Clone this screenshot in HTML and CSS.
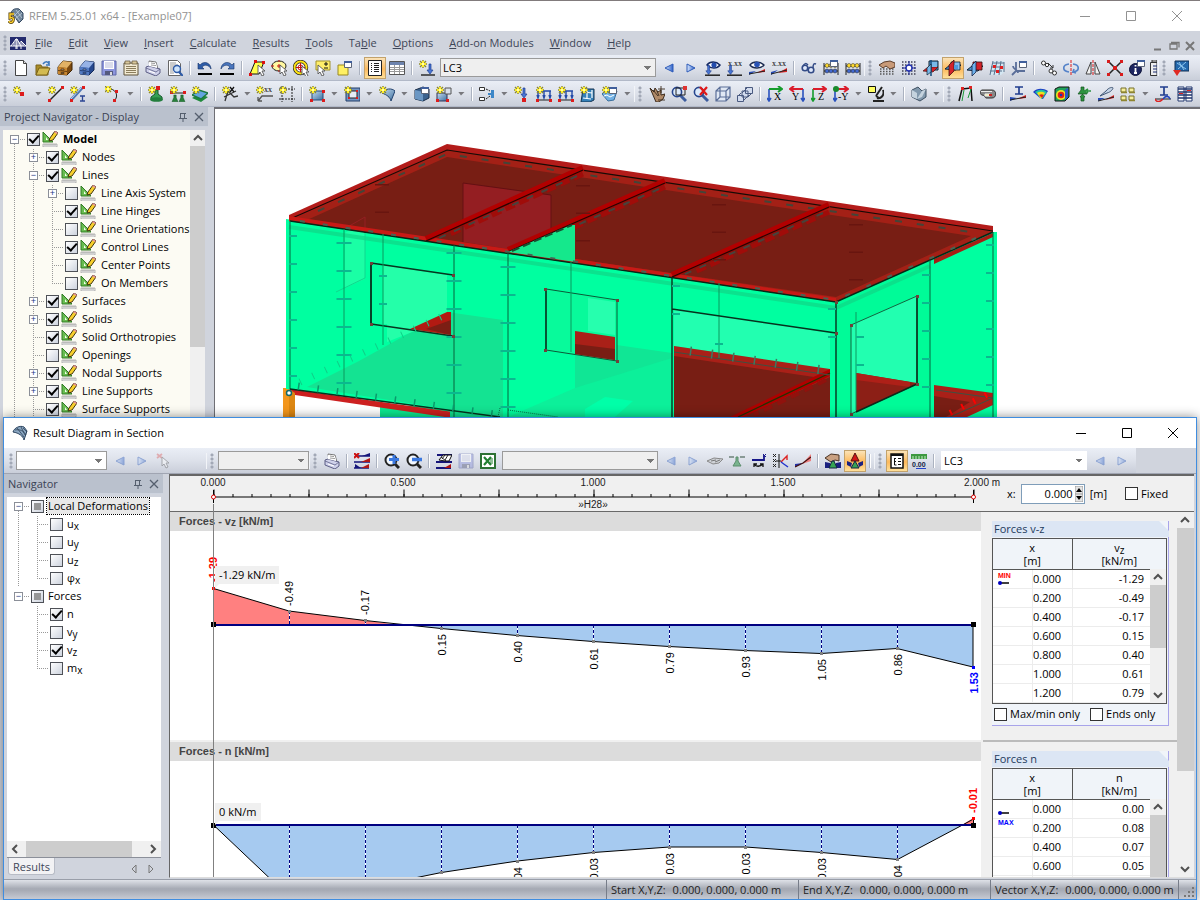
FILE: index.html
```html
<!DOCTYPE html>
<html lang="en">
<head>
<meta charset="utf-8">
<title>RFEM 5.25.01 x64 - [Example07]</title>
<link rel="stylesheet" href="styles.css">
</head>
<body>
<svg class="defs" aria-hidden="true">
<defs>
<linearGradient id="gb" x1="0" y1="0" x2="1" y2="1"><stop offset="0" stop-color="#c5dcf2"/><stop offset="1" stop-color="#3d6f9e"/></linearGradient>
<linearGradient id="ga" x1="0" y1="0" x2="1" y2="0"><stop offset="0" stop-color="#dceaff"/><stop offset="1" stop-color="#2d61c8"/></linearGradient>
<g id="star"><path d="M4 0v8M0 4h8M1 1l6 6M7 1L1 7" stroke="#8f8a28" stroke-width="1.4"/><path d="M4 1v6M1 4h6" stroke="#ffee21" stroke-width="2"/><circle cx="4" cy="4" r="1.3" fill="#fffbb0"/></g>
<g id="cur"><path d="M0 0v9l2-2 2 4 2-1-2-4h3z" fill="#fff" stroke="#555" stroke-width=".9"/></g>
<g id="win"><path d="M.5.5h7v6h-7z" fill="#fff" stroke="#5b6478"/><path d="M0 0h8v2H0z" fill="#405f9c"/></g>
<g id="mag"><path d="M9 9l6 6" stroke="#3c5c9e" stroke-width="3"/><circle cx="6" cy="6" r="4.6" fill="#dceafa" stroke="#26458d" stroke-width="1.6"/></g>
<g id="sup"><path d="M3 0h4v3l3 5H0l3-5z" fill="#28803b" stroke="#125023" stroke-width=".6"/></g>
<g id="ld"><path d="M0 1h14M1 1v6M7 1v6M13 1v6M0 5l1 3 1-3M6 5l1 3 1-3M12 5l1 3 1-3" fill="none" stroke="#234aa8" stroke-width="1.4"/></g>
<g id="arw"><path d="M2 0v6H0l3 4 3-4H4V0z" fill="#4876d5" stroke="#203f92" stroke-width=".7"/></g>
</defs>
<symbol id="i-app" viewBox="0 0 16 16"><path d="M3 5C4 1 8 0 11 1l4 4v6l-4 4-2-3z" fill="#6f8499" stroke="#344861"/><path d="M5 4l7 9M8 2l6 8M7 11l7-6M6 8l6-6" stroke="#c0cfdd" stroke-width=".8"/><path d="M6 6H2v4c3-1 4 0 3 3-1 2-3 2-4 0" fill="none" stroke="#523b00" stroke-width="3"/><path d="M6 6H2v4c3-1 4 0 3 3-1 2-3 2-4 0" fill="none" stroke="#ffd333" stroke-width="1.500"/></symbol>
<symbol id="i-bridge" viewBox="0 0 16 13"><path fill="#242b6e" d="M0 0h16v13H0z"/><path d="M0 9h16M6 12V2h1v10M6 2L1 9M7 2l4 7M11 4v8M11 4l5 5M4 5v4M9 5v4M13 6v3" stroke="#fff" fill="none"/></symbol>
<symbol id="i-new" viewBox="0 0 16 16"><path d="M2.500.500h8l3 3v12h-11z" fill="#fff" stroke="#444"/><path d="M10.500.500v3h3" fill="#ddd" stroke="#444"/></symbol>
<symbol id="i-open" viewBox="0 0 16 16"><path d="M1 5h5l1 2h6v8H1z" fill="#a98c28" stroke="#7a6318"/><path d="M1 15l3-7h11l-3 7z" fill="#d3bb52" stroke="#7a6318"/><path d="M8 4c2-3 5-3 6 0V1M15 5h-4" fill="none" stroke="#3d79bd" stroke-width="1.600"/></symbol>
<symbol id="i-cab" viewBox="0 0 16 16"><path d="M1 7l5-6 9 1v8l-5 5-9-1z" fill="#7c4a10" stroke="#3f2506"/><path d="M1 7l5-6 9 1-5 6z" fill="#e2b265"/><path d="M1 7l9 1v7l-9-1z" fill="#c98730"/><path d="M1 10.500l9 1M4 9h3v1H4zM4 12.500h3v1H4z" fill="#fff" stroke="#4a2c08" stroke-width=".8"/></symbol>
<symbol id="i-cabb" viewBox="0 0 16 16"><path d="M1 7l5-6 9 1v8l-5 5-9-1z" fill="#27498f" stroke="#152a58"/><path d="M1 7l5-6 9 1-5 6z" fill="#96b2e6"/><path d="M1 7l9 1v7l-9-1z" fill="#537bc4"/><path d="M1 10.500l9 1M4 9h3v1H4zM4 12.500h3v1H4z" fill="#fff" stroke="#1b3264" stroke-width=".8"/></symbol>
<symbol id="i-save" viewBox="0 0 16 16"><path d="M1 1h14v14H1z" fill="#8d96dd" stroke="#6168a8"/><path d="M3 1h10v8H3z" fill="#fff"/><path d="M4 3h8M4 5h8M4 7h8" stroke="#b5b9d8"/><path d="M4 11h8v4H4z" fill="#555a7d"/><path d="M9 12h2v3H9z" fill="#ddd"/></symbol>
<symbol id="i-note" viewBox="0 0 16 16"><path d="M1 3h14v12H1z" fill="#f2ead2" stroke="#5f5238"/><path d="M2 1h5v3H2zM9 1h5v3H9z" fill="#d8c79b" stroke="#5f5238" stroke-width=".7"/><path d="M3 6.500h10M3 8.500h10M3 10.500h10M3 12.500h10" stroke="#8b7d5c"/></symbol>
<symbol id="i-print" viewBox="0 0 16 16"><path d="M4 1l7 1 2 7-8-1z" fill="#fff" stroke="#777"/><path d="M1 7l3-1 11 3v4l-4 3-10-4z" fill="#cfd1ea" stroke="#5d5f86"/><path d="M4 6l8 2-1-5-7-1z" fill="#fff"/><path d="M1 8l10 4 4-3" fill="none" stroke="#5d5f86" stroke-width=".8"/><path d="M6 3l4 .6M6 5l5 .6" stroke="#9c9c9c"/><path d="M4 11l6 2" stroke="#fff"/></symbol>
<symbol id="i-prev" viewBox="0 0 16 16"><path d="M1.500.500h9l3 3v12h-12z" fill="#fff" stroke="#666"/><path d="M3 3h6M3 5h8M3 7h4M3 9h3M3 11h3M3 13h4" stroke="#999"/><circle cx="10" cy="9" r="3.500" fill="#cfe4fb" stroke="#2e5ba7" stroke-width="1.400"/><path d="M12 12l4 4" stroke="#2e5ba7" stroke-width="2.200"/></symbol>
<symbol id="i-undo" viewBox="0 0 16 16"><path d="M1 3v6h6L5 7c3-3 7-2 9 2 0-6-7-9-11-4z" fill="#2f5da8" stroke="#163468" stroke-width=".6"/><path d="M1 13h14v2H1z"/></symbol>
<symbol id="i-redo" viewBox="0 0 16 16"><path d="M15 3v6H9l2-2C8 4 4 5 2 9c0-6 7-9 11-4z" fill="#4a76bd" stroke="#163468" stroke-width=".6"/><path d="M1 13h14v2H1z"/></symbol>
<symbol id="i-selp" viewBox="0 0 16 16"><path d="M1 14L6 2h9l-5 12z" fill="#ffff4d" stroke="#111"/><path d="M0 13h3v3H0zM5 0h3v3H5zM13 1h3v3h-3z" fill="#d11"/><use href="#cur" x="9" y="5"/></symbol>
<symbol id="i-sele" viewBox="0 0 16 16"><ellipse cx="8" cy="6" rx="7" ry="5" fill="#fff7a0" stroke="#222"/><path d="M8 4v4M6 6h4M0 6h3M8 0v2M8 10v2" stroke="#c11"/><use href="#cur" x="9" y="5"/></symbol>
<symbol id="i-selc" viewBox="0 0 16 16"><circle cx="7.500" cy="7.500" r="6" fill="#fff" stroke="#222" stroke-width="3.400"/><circle cx="7.500" cy="7.500" r="6" fill="none" stroke="#ffe414" stroke-width="2"/><circle cx="7.500" cy="7.500" r="2.500" fill="none" stroke="#c11"/><path d="M7.500 3v9M3 7.500h9" stroke="#c11"/><use href="#cur" x="9" y="6"/></symbol>
<symbol id="i-seln" viewBox="0 0 16 16"><path d="M1 1h14v9H1z" fill="#ffee6a" stroke="#a1912b"/><path d="M11 2v4M9 4h4M9 8h4" stroke="#111"/><use href="#cur" x="3" y="5"/></symbol>
<symbol id="i-selw" viewBox="0 0 16 16"><path d="M1 5h10v10H1z" fill="#fff063" stroke="#988822"/><use href="#win" x="7" y="1"/></symbol>
<symbol id="i-list" viewBox="0 0 16 16"><path d="M1.500.500h13v15h-13z" fill="#fff" stroke="#222"/><path d="M4 3.500h1M4 5.500h1M4 7.500h1M4 9.500h1M4 11.500h1M7 3.500h5M7 5.500h5M7 7.500h5M7 9.500h5M7 11.500h5" stroke="#222"/></symbol>
<symbol id="i-table" viewBox="0 0 16 16"><path d="M.500 1.500h15v13H.500z" fill="#fff" stroke="#555"/><path d="M1 2h14v3H1z" fill="#6d83ad"/><path d="M1 7.500h14M1 9.500h14M1 11.500h14M5.500 5v9M10.500 5v9" stroke="#999"/></symbol>
<symbol id="i-nload" viewBox="0 0 16 16"><use href="#star"/><use href="#arw" x="8" y="4"/><path d="M2 15h14" stroke="#222" stroke-width="1.400"/></symbol>
<symbol id="i-l" viewBox="0 0 16 16"><path d="M4 8l8-4v8z" fill="url(#ga)" stroke="#2c5ab8"/></symbol>
<symbol id="i-r" viewBox="0 0 16 16"><path d="M12 8L4 4v8z" fill="url(#ga)" stroke="#2c5ab8"/></symbol>
<symbol id="i-eyeld" viewBox="0 0 16 16"><path d="M2 5c3-4 9-4 13 0-3 4-9 4-13 0z" fill="#fff" stroke="#162a62" stroke-width="1.500"/><circle cx="9" cy="5" r="2.600" fill="#234cae"/><use href="#arw" x="1" y="6" transform="scale(.9)"/><path d="M0 15.200h15" stroke="#222" stroke-width="1.500"/></symbol>
<symbol id="i-eyeres" viewBox="0 0 16 16"><path d="M1 5c3-4 10-4 14 0-3 4-11 4-14 0z" fill="#fff" stroke="#1c2b50" stroke-width="1.300"/><circle cx="8" cy="4.500" r="2.800" fill="#2852b5"/><path d="M0 15V12l7-1z" fill="#2449b5"/><path d="M16 9v3l-9 1z" fill="#d22"/><path d="M0 14l16-3" stroke="#222"/></symbol>
<symbol id="i-glass" viewBox="0 0 16 16"><g fill="#dfe8fa" stroke="#334b86" stroke-width="1.600"><circle cx="4" cy="8" r="2.800"/><circle cx="10" cy="10" r="2.800"/></g><path d="M6 8l2 1M2 6c2-3 3-3 5-1M12 8c0-4 1-5 3-4" fill="none" stroke="#334b86" stroke-width="1.500"/></symbol>
<symbol id="i-aba" viewBox="0 0 16 16"><path d="M1 3v12M15 3v12M1 6h14M1 11h14" stroke="#222"/><g stroke="#222" stroke-width=".5"><g fill="#ffda2e"><circle cx="4" cy="5.500" r="2"/><circle cx="8" cy="5.500" r="2"/><circle cx="12" cy="5.500" r="2"/></g><g fill="#4168d0"><circle cx="4" cy="11" r="2"/><circle cx="8" cy="11" r="2"/><circle cx="12" cy="11" r="2"/></g></g></symbol>
<symbol id="i-abaw" viewBox="0 0 16 16"><use href="#i-aba"/><use href="#win" x="7" y="0"/></symbol>
<symbol id="i-hand" viewBox="0 0 16 16"><path d="M1 9h14M1 11.500h14M1 14h14" stroke="#555" stroke-dasharray="1.500 1.500" stroke-width="1.500"/><path d="M0 5l5-3 6-1 5 2v4l-5 2-4-3-3 2z" fill="#c89a78" stroke="#5b3d29"/></symbol>
<symbol id="i-grid" viewBox="0 0 16 16"><path d="M1 2h15M1 5h15M1 8h15M1 11h15M1 14h15" stroke="#445" stroke-dasharray="1.500 1.500" stroke-width="1.300"/><path d="M8 1v14M1 8h14" stroke="#1f2b9a"/><circle cx="8" cy="8" r="3" fill="#fff" stroke="#2030b0" stroke-width="1.400"/></symbol>
<symbol id="i-pl1" viewBox="0 0 16 16"><path d="M6 1h9v9H6z" fill="#5aa5df" stroke="#123"/><path d="M0 11l5-4h10l-5 5z" fill="#d3222a" stroke="#411" stroke-width=".7"/><path d="M7 2h7v5H7z" fill="#78b8e8"/><path d="M8 0v16" stroke="#124a7c" stroke-width="1.500"/><path d="M4 8l4-4v8l-4 3z" fill="#78b8e8" stroke="#123" stroke-width=".7"/></symbol>
<symbol id="i-pl2" viewBox="0 0 16 16"><path d="M0 9l5-4h11l-5 5z" fill="#4f99da" stroke="#123"/><path d="M6 2h9v8H6z" fill="#86bdf0" stroke="#123" stroke-width=".8"/><path d="M4 5l5-5v11l-5 5z" fill="#d3222a" stroke="#411" stroke-width=".8"/><path d="M9 5h4v4H9z" fill="#4f99da"/></symbol>
<symbol id="i-pl3" viewBox="0 0 16 16"><path d="M0 10l5-4h11l-5 5z" fill="#4f99da" stroke="#123"/><path d="M6 2h9v8H6z" fill="#d3222a" stroke="#311" stroke-width=".8"/><path d="M5 5l4-4v11l-4 4z" fill="#6fb2ec" stroke="#124" stroke-width=".8"/></symbol>
<symbol id="i-gpl" viewBox="0 0 16 16"><path d="M4 1h11v11L12 15H1V10z" fill="#d4e7f2"/><path d="M1 11h12M2 7h12M4 3h11M4 1L1 15M8 1L5 15M12 1l-2 14M15 2v10" stroke="#58718c" fill="none"/><path d="M4 5h3v3H4zM11 6h3v3h-3zM7 10h3v3H7z" fill="#e02020"/></symbol>
<symbol id="i-axw" viewBox="0 0 16 16"><path d="M5 2v9M5 11h9M5 11l-4 4M2 6c0 4 5 3 5 7" fill="none" stroke="#5a6e99" stroke-width="1.800"/><use href="#win" x="8" y="1"/></symbol>
<symbol id="i-move" viewBox="0 0 16 16"><g fill="#fff" stroke="#333"><circle cx="2.500" cy="3" r="2"/><circle cx="6" cy="5" r="1.700"/><circle cx="10" cy="11" r="2"/><circle cx="13.500" cy="13" r="2"/></g><path d="M7 3l5 5M12 5v3H9" fill="none" stroke="#333"/></symbol>
<symbol id="i-rot" viewBox="0 0 16 16"><path d="M6 4C-1 5-1 11 6 12M10 4c7 1 7 7 0 8l1-3m-1 3l3 1" fill="none" stroke="#5583c9" stroke-width="1.700"/><path d="M8 0v16" stroke="#e01818" stroke-dasharray="3 1"/></symbol>
<symbol id="i-mir" viewBox="0 0 16 16"><path d="M6 2v12H1zM10 2v12h5z" fill="#f2f2f2" stroke="#444"/><path d="M8 0v16" stroke="#e01818" stroke-dasharray="3 1"/></symbol>
<symbol id="i-cross" viewBox="0 0 16 16"><path d="M2 2l12 12M14 2L2 14" stroke="#222" stroke-width="1.500"/><path d="M0 0h3v3H0zM13 0h3v3h-3zM0 13h3v3H0zM13 13h3v3h-3zM6 6h4v4H6z" fill="#d81c1c"/></symbol>
<symbol id="i-info" viewBox="0 0 16 16"><circle cx="6.500" cy="9.500" r="6" fill="#1c2560" stroke="#0d1238"/><path d="M6.500 8v5M6.500 5v1.500M5 13h3" stroke="#fff" stroke-width="1.800"/><use href="#win" x="8" y="0"/></symbol>
<symbol id="i-bat" viewBox="0 0 8 16"><path d="M3 0h5v2H3zM1.500 2.500H8v13H1.500z" fill="#eee" stroke="#333"/><path d="M4 6h4M4 9h4M4 12h4" stroke="#1b2c70"/></symbol>
<symbol id="i-scr" viewBox="0 0 16 16"><path d="M2 1h14v10H2z" fill="#2468ac" stroke="#0f2e55"/><path d="M4 3l9 6M6 2l5 8M13 2L5 9" stroke="#8fc7ef"/><path d="M0 10h8l-4 6z" fill="#e02a22"/></symbol>
<symbol id="i-node" viewBox="0 0 16 16"><use href="#star"/><path d="M7 6h4v4H7z" fill="#dd1c1c"/></symbol>
<symbol id="i-line" viewBox="0 0 16 16"><path d="M2 14L14 2" stroke="#222" stroke-width="1.400"/><path d="M0 13h3v3H0zM13 0h3v3h-3z" fill="#dd1c1c"/><use href="#star"/></symbol>
<symbol id="i-mem" viewBox="0 0 16 16"><path d="M1 14L12 2" stroke="#4e76b4" stroke-width="3"/><path d="M1 13L11 2" stroke="#c5d8f1"/><path d="M0 13h3v3H0zM12 0h3v3h-3z" fill="#dd1c1c"/><use href="#star"/><path d="M10 10h5M10 15h5M12.500 10v5" stroke="#2b4594" stroke-width="1.300"/></symbol>
<symbol id="i-arc" viewBox="0 0 16 16"><path d="M3 3c7-1 11 6 7 11" fill="none" stroke="#222"/><path d="M2 1h3v3H2zM10 4h3v3h-3zM8 13h3v3H8z" fill="#dd1c1c"/><use href="#star" x="-1" y="-1"/></symbol>
<symbol id="i-nsup" viewBox="0 0 16 16"><path d="M7 4h3v4l4 3v2H3v-2l4-3z" fill="#35a052" stroke="#14562a"/><ellipse cx="8.500" cy="13.500" rx="6.500" ry="2.300" fill="#237e3d"/><path d="M8 0h4v4H8z" fill="#dd1c1c"/><use href="#star"/></symbol>
<symbol id="i-lsup" viewBox="0 0 16 16"><path d="M1 7h14" stroke="#222"/><path d="M0 5h3v3H0zM13 5h3v3h-3z" fill="#dd1c1c"/><use href="#sup" transform="translate(2 9) scale(.6 .85)"/><use href="#sup" transform="translate(9 9) scale(.6 .85)"/><use href="#star"/></symbol>
<symbol id="i-ssup" viewBox="0 0 16 16"><path d="M0 12l7-4 9 3-7 5z" fill="#1f8a3b"/><path d="M0 9l7-5 9 3-7 6z" fill="#63a4df" stroke="#1d7a40" stroke-width="1.400"/><use href="#star"/></symbol>
<symbol id="i-dimx" viewBox="0 0 16 16"><path d="M3 15L6 5l6 6 4-1M2 11l12-6" fill="none" stroke="#333" stroke-width="1.300"/><path d="M8 1l4 5M12 1L8 6" stroke="#111" stroke-width="1.300"/><use href="#star"/></symbol>
<symbol id="i-frame" viewBox="0 0 16 16"><path d="M3 0v16M13 0v16M0 3h16M0 13h16" stroke="#222" stroke-dasharray="2 1" fill="none"/><use href="#star"/></symbol>
<symbol id="i-surf" viewBox="0 0 16 16"><path d="M3 5h11v9H3z" fill="url(#gb)" stroke="#264a78"/><path d="M1 13h3v3H1zM13 13h3v3h-3zM13 4h3v3h-3z" fill="#dd1c1c"/><use href="#star"/></symbol>
<symbol id="i-opng" viewBox="0 0 16 16"><path d="M2 2h14v13H2z" fill="#7495c2" stroke="#233f6a"/><path d="M5 5h8v7H5z" fill="#e5ecf6" stroke="#222"/><path d="M4 4h2v2H4zM12 4h2v2h-2zM4 11h2v2H4zM12 11h2v2h-2z" fill="#dd1c1c"/><use href="#star"/></symbol>
<symbol id="i-shell" viewBox="0 0 16 16"><path d="M3 7c3-5 10-5 13-2l-4 10c-1-4-4-6-9-8z" fill="url(#gb)" stroke="#21416d"/><use href="#star"/></symbol>
<symbol id="i-solid" viewBox="0 0 16 16"><path d="M1 4l8-3 6 2v9l-6 3-8-2z" fill="#3b628e" stroke="#182d49"/><path d="M1 4l8 2v9l-8-2z" fill="#6b97c4"/><use href="#win" x="7" y="1"/></symbol>
<symbol id="i-cubes" viewBox="0 0 16 16"><path d="M1 7h10v8H1z" fill="url(#gb)" stroke="#335"/><path d="M9 2h6v6H9z" fill="#d8dfe9" stroke="#555"/><path d="M0 13h3v3H0zM10 13h3v3h-3z" fill="#dd1c1c"/><use href="#star"/></symbol>
<symbol id="i-sect" viewBox="0 0 16 16"><path d="M.500 1.500h5v3h-5zM.500 11.500h5v3h-5z" fill="#fff" stroke="#333"/><path d="M7 3l4 2M7 13l4-3" stroke="#222" stroke-dasharray="2 1"/><path d="M9 7h3V4h3v8h-3v-3H9z" fill="#3d87c8"/></symbol>
<symbol id="i-pl" viewBox="0 0 16 16"><use href="#star"/><use href="#arw" x="7" y="2"/><path d="M8 12h4v4H8z" fill="#dd1c1c"/></symbol>
<symbol id="i-ll" viewBox="0 0 16 16"><use href="#ld" x="1" y="4"/><path d="M1 14h14" stroke="#222"/><path d="M0 13h3v3H0zM13 13h3v3h-3z" fill="#dd1c1c"/><use href="#star"/></symbol>
<symbol id="i-sl" viewBox="0 0 16 16"><path d="M3 3h11v11l-4 2H1z" fill="#3480b8" stroke="#143350"/><path d="M4 6l8 1M3 12l8 1M7 3v9M12 4v8" stroke="#fff" stroke-width="1.200"/><use href="#star"/></symbol>
<symbol id="i-fl" viewBox="0 0 16 16"><path d="M0 8l3-3h12l-3 9-6 1z" fill="#72b1e4" stroke="#3a6e9c"/><path d="M2 10l3-1 3 2 4-2" stroke="#fff" fill="none"/><use href="#win" x="7" y="1"/><use href="#star"/></symbol>
<symbol id="i-pan" viewBox="0 0 16 16"><path d="M1 2l4 4 1-4 3 4 3-2v5l4-1-2 5-4 3H7z" fill="#b08a69" stroke="#3b2a1c"/><path d="M4 4l5 6M8 5l2 5M12 0v7M9 3h7M9 14h7" stroke="#3b2a1c" stroke-width=".9"/></symbol>
<symbol id="i-zw" viewBox="0 0 16 16"><use href="#mag"/><path d="M5 2h9v7H5z" fill="none" stroke="#222"/><path d="M12 0h4v4h-4z" fill="#d33"/></symbol>
<symbol id="i-zx" viewBox="0 0 16 16"><use href="#mag"/><path d="M7 1l7 8M14 1L7 9" stroke="#e01818" stroke-width="2.200"/></symbol>
<symbol id="i-box" viewBox="0 0 16 16"><path d="M1 5l4-4h10v10l-4 4H1zM1 5h10v10M11 5l4-4M5 1v10h10M5 11l-4 4" fill="#e0e8f4" stroke="#5a6e98" stroke-width="1.200"/></symbol>
<symbol id="i-steps" viewBox="0 0 16 16"><path d="M8.500 1.500h7v6h-7zM5 5h6v6H5zM.500 9.500h6v6h-6z" fill="#d3dcee" stroke="#4a5a80"/><path d="M8 4l3-3M5 7l3-3M1 10l3-3M6 15l6-6M11 11l4-4" stroke="#4a5a80"/></symbol>
<symbol id="i-micro" viewBox="0 0 16 16"><path d="M.500.500h7v6h-7z" fill="#ffff62" stroke="#111"/><path d="M14 1l-6 9M15 4c2 5-2 9-6 8M5 15h11M8 10l3 2" fill="none" stroke="#222" stroke-width="2"/></symbol>
<symbol id="i-render" viewBox="0 0 16 16"><path d="M1 4l6-3 4 4 4-2v8l-6 4-8-4z" fill="#8299ad" stroke="#3e5062"/><path d="M1 4l5 3v6l-5-2zM11 5l4-2-4 8-5 2z" fill="#c5d3de"/></symbol>
<symbol id="i-defo" viewBox="0 0 16 16"><path d="M1 15L4 3l9-1 1 13" fill="none" stroke="#111" stroke-width="1.500"/><path d="M4 15L6 4M13 3l-3 9" stroke="#189838"/><path d="M3 1h3v3H3zM11 0h3v3h-3z" fill="#d22"/></symbol>
<symbol id="i-cyl" viewBox="0 0 16 16"><path d="M2 4h10c5 0 5 8 0 8H6c-1 0-1-3-4-3-2 0-2-5 0-5z" fill="#888" stroke="#333"/><path d="M1 5.500h11M5 8h5v2H5z" fill="#f5ef9d" stroke="#eee"/><path d="M9 8h3v2H9z" fill="#c22"/></symbol>
<symbol id="i-ires" viewBox="0 0 16 16"><path d="M5 1h8M5 8h8M9 1v7" stroke="#213e8e" stroke-width="1.700"/><path d="M0 15V11l7 1z" fill="#2449b5"/><path d="M16 9v3l-9 1z" fill="#d22"/><path d="M0 14l16-3" stroke="#222"/></symbol>
<symbol id="i-iso" viewBox="0 0 16 16"><path d="M1 6c4-4 10-4 15-1l-5 8c-2 0-4-2-10-7z" fill="#1c3fc4"/><path d="M3 6c4-3 8-3 12 0l-5 7z" fill="#20c4a5"/><path d="M5 7c3-2 6-1 8 0l-4 6z" fill="#e9e21d"/><path d="M7 9c2-1 3-1 5 0l-2 3z" fill="#e32118"/></symbol>
<symbol id="i-ball" viewBox="0 0 16 16"><path d="M1 3l4-2h10v10l-4 4H1z" fill="#20a35a" stroke="#111"/><circle cx="7" cy="9" r="5" fill="#f0e51f"/><circle cx="7" cy="9" r="3.300" fill="#e32118"/><circle cx="7" cy="9" r="1.300" fill="#2233aa"/><path d="M11 4l3-2v9l-3 3z" fill="#2b58c8"/></symbol>
<symbol id="i-reac" viewBox="0 0 16 16"><path d="M5 1h3v3l3 4H2l3-4zM5 15v-4H4l2.500-3L9 11H8v4z" fill="#2d9340" stroke="#155521" stroke-width=".7"/><path d="M15 5h-4m1-2L9 5l3 2" stroke="#2d9340" stroke-width="1.600" fill="none"/></symbol>
<symbol id="i-spoon" viewBox="0 0 16 16"><path d="M2 10L8 5c3-4 7-4 7-3s-2 4-6 5z" fill="#c4d3e6" stroke="#405573"/><path d="M0 15V12h7z" fill="#2449b5"/><path d="M16 9v3l-9 2z" fill="#d22"/><path d="M0 15l16-4" stroke="#222"/></symbol>
<symbol id="i-four" viewBox="0 0 16 16"><path d="M1 2h5v4H1zM9 2h5v4H9zM1 10h5v4H1zM9 10h5v4H9z" fill="#f7ef9a" stroke="#77702d"/><path d="M1 6.500h6M9 6.500h6M1 14.500h6M9 14.500h6" stroke="#8e852f" stroke-width="1.500"/></symbol>
<symbol id="i-icurve" viewBox="0 0 16 16"><path d="M5 1h8M5 9h8M9 1v8" stroke="#213e8e" stroke-width="1.700"/><path d="M0 13h16" stroke="#222"/><path d="M0 13c2 4 5 3 8 0" stroke="#d22" stroke-width="1.600" fill="none"/><path d="M8 13c3-4 6-3 7 0" stroke="#24b" stroke-width="1.600" fill="none"/></symbol>
<symbol id="i-tabs" viewBox="0 0 16 16"><path d="M1 1h6v14H1zM9 1h6v14H9z" fill="#fff" stroke="#20366e"/><path d="M1 3h14M1 6h14M1 9h14M1 12h14" stroke="#20366e" stroke-width="1.300"/><path d="M2 7.500h4M10 4.500h4" stroke="#d22"/></symbol>
<symbol id="i-disp" viewBox="0 0 16 16"><path d="M1 1l10 10H1z" fill="#68bd50" stroke="#307a25"/><path d="M4 6l2 3H4z" fill="#f7fff0"/><path d="M7 10l1-3 5-7 3 2-5 7z" fill="#f7cf2c" stroke="#403610"/><path d="M13 0l3 2-1 1-3-2z" fill="#e790a0"/><path d="M1 13h14v3H1z" fill="#f1f1f1" stroke="#999" stroke-width=".7"/><path d="M3 13v2M5 13v2M7 13v2M9 13v2M11 13v2M13 13v2" stroke="#888" stroke-width=".6"/></symbol>
<symbol id="i-dome" viewBox="0 0 16 16"><path d="M1 7c1-4 7-7 11-5l3 4-3 9c-1-4-5-7-11-8z" fill="#8ba7c2" stroke="#2b435e"/><path d="M5 3l7 9M9 2l4 8M3 5c5-1 9 1 11 5M15 7l-4-4" fill="none" stroke="#24364c" stroke-width=".7"/></symbol>
<symbol id="i-curx" viewBox="0 0 16 16"><path d="M1 1l5 4M6 1L1 5" stroke="#d66" stroke-width="1.700"/><use href="#cur" x="6" y="4"/></symbol>
<symbol id="i-drx" viewBox="0 0 16 16"><path d="M1 3h15M0 9h16M0 15h15" stroke="#15157a" stroke-width="1.500"/><path d="M8 3l8-3v3z" fill="#15157a"/><path d="M7 9l9-4v4z" fill="#b01818"/><path d="M1 15v-4l6 4z" fill="#15157a"/><path d="M7 15l8-4v4z" fill="#b01818"/><path d="M0 0l5 5M5 0L0 5" stroke="#c11" stroke-width="2"/></symbol>
<symbol id="i-zp" viewBox="0 0 16 16"><circle cx="7" cy="7" r="5.500" fill="#f3f8ff" stroke="#222" stroke-width="2"/><path d="M11 11l4 4" stroke="#222" stroke-width="3"/><path d="M10 2v9M5 6.500h10" stroke="#3b78df" stroke-width="3"/></symbol>
<symbol id="i-zm" viewBox="0 0 16 16"><circle cx="7" cy="7" r="5.500" fill="#f3f8ff" stroke="#222" stroke-width="2"/><path d="M11 11l4 4" stroke="#222" stroke-width="3"/><path d="M6 6.500h10" stroke="#3b78df" stroke-width="3.500"/></symbol>
<symbol id="i-drf" viewBox="0 0 16 16"><path d="M1 2h15M0 9h16M0 15h15" stroke="#15157a" stroke-width="1.800"/><path d="M3 7l4-5h9l-3 6H9z" fill="#fff" stroke="#111"/><path d="M6 6l3-4M9 7l3-5M5 4l5 4" stroke="#222"/><path d="M8 15l7-4v4z" fill="#a11"/></symbol>
<symbol id="i-xls" viewBox="0 0 16 16"><path d="M1 1h14v14H1z" fill="#fff" stroke="#2c7134" stroke-width="2"/><path d="M4 4l7 8M11 4l-7 8" stroke="#238032" stroke-width="2.200"/><path d="M10 6h3M10 8h3M10 10h3" stroke="#238032"/></symbol>
<symbol id="i-birds" viewBox="0 0 16 16"><path d="M0 8l7-3 9 1-4 4-6 1z" fill="#cfd2d7" stroke="#888"/><path d="M4 8l5-1M8 9l5-2" stroke="#777"/></symbol>
<symbol id="i-supl" viewBox="0 0 16 16"><path d="M0 4h5M11 4h5" stroke="#8a9a96" stroke-width="2"/><path d="M7 4h2v4l3 5H4l3-5z" fill="#79b48e" stroke="#5c8d6d"/></symbol>
<symbol id="i-swap" viewBox="0 0 16 16"><path d="M1 7h12M13 2v6" stroke="#17178a" stroke-width="1.800"/><path d="M12 1l3 3M15 1l-3 3" stroke="#17178a"/><path d="M3 11c2 3 6 3 9 0M12 14v-3H9M3 14v-3h3" stroke="#111" stroke-width="1.300" fill="none"/></symbol>
<symbol id="i-sym" viewBox="0 0 16 16"><path d="M0 1l3 3M3 1L0 4M0 6l3 3M3 6L0 9M0 11l3 3M3 11l-3 3" stroke="#222"/><path d="M6 1v14M3 8h5" stroke="#111"/><path d="M8 9l6-6v4" stroke="#d22" stroke-width="1.400" fill="none"/><path d="M8 9l7 5" stroke="#23c" stroke-width="1.400"/></symbol>
<symbol id="i-trend" viewBox="0 0 16 16"><path d="M0 14v-3l8-1z" fill="#2431a5"/><path d="M16 1v7l-9 3z" fill="#ef7f7f"/><path d="M0 14l8-4 8-6" stroke="#411" stroke-width="1.300" fill="none"/></symbol>
<symbol id="i-hsup" viewBox="0 0 16 16"><path d="M0 9l5 1 1 5H0zM16 9l-5 1-1 5h6z" fill="#1b2180"/><path d="M0 5l6-4 8 1v6l-4-1-4 2z" fill="#c9a183" stroke="#4a3425"/><path d="M7 8h2l3 7H4z" fill="#35a352" stroke="#124"/></symbol>
<symbol id="i-rsup" viewBox="0 0 16 16"><path d="M0 8l5 2-1 4-4-2zM16 8l-5 2 1 4 4-2z" fill="#1b2180"/><path d="M8 0l4 8H4z" fill="#d01818" stroke="#511"/><path d="M8 8l4 7H4z" fill="#35a352" stroke="#124"/></symbol>
<symbol id="i-tree" viewBox="0 0 16 16"><path d="M2 1h12v14H2z" fill="#fff" stroke="#111" stroke-width="1.500"/><path d="M2 2h12" stroke="#111" stroke-width="2"/><path d="M5.500 5v7h2M5 5.500h2M5 8.500h2M9 5.500h3M9 8.500h3M9 11.500h3" fill="none" stroke="#111"/></symbol>
<symbol id="i-pin" viewBox="0 0 16 16"><path d="M5.500 4v5M5 4.500h6M4 9.500h8M9.500 4v5M8 10v3" stroke="#555f6e" fill="none"/></symbol>
<symbol id="i-x" viewBox="0 0 16 16"><path d="M4 4l8 8M12 4l-8 8" stroke="#555f6e" stroke-width="1.300"/></symbol>
<symbol id="i-up" viewBox="0 0 16 16"><path d="M4 10l4-4 4 4" fill="none" stroke="#505050" stroke-width="2"/></symbol>
<symbol id="i-down" viewBox="0 0 16 16"><path d="M4 6l4 4 4-4" fill="none" stroke="#505050" stroke-width="2"/></symbol>
<symbol id="i-left" viewBox="0 0 16 16"><path d="M10 4L6 8l4 4" fill="none" stroke="#505050" stroke-width="2"/></symbol>
<symbol id="i-right" viewBox="0 0 16 16"><path d="M6 4l4 4-4 4" fill="none" stroke="#505050" stroke-width="2"/></symbol>
<symbol id="i-min" viewBox="0 0 12 12"><path d="M1 6.500h10" stroke="currentColor"/></symbol>
<symbol id="i-max" viewBox="0 0 12 12"><path d="M1.500 1.500h9v9h-9z" fill="none" stroke="currentColor"/></symbol>
<symbol id="i-close" viewBox="0 0 12 12"><path d="M1 1l10 10M11 1L1 11" stroke="currentColor"/></symbol>
</svg>

<div class="app">
<header class="titlebar">
  <svg class="ic"><use href="#i-app"/></svg><h1>RFEM 5.25.01 x64 - [Example07]</h1>
  <button class="wb" aria-label="Minimize"><svg><use href="#i-min"/></svg></button><button class="wb" aria-label="Maximize"><svg><use href="#i-max"/></svg></button><button class="wb" aria-label="Close"><svg><use href="#i-close"/></svg></button>
</header>
<nav class="menubar">
  <i class="grip"></i><svg class="bridge"><use href="#i-bridge"/></svg>
  <div class="menus"><a href="#"><u>F</u>ile</a><a href="#"><u>E</u>dit</a><a href="#"><u>V</u>iew</a><a href="#"><u>I</u>nsert</a><a href="#"><u>C</u>alculate</a><a href="#"><u>R</u>esults</a><a href="#"><u>T</u>ools</a><a href="#">Ta<u>b</u>le</a><a href="#"><u>O</u>ptions</a><a href="#"><u>A</u>dd-on Modules</a><a href="#"><u>W</u>indow</a><a href="#"><u>H</u>elp</a></div>
  <svg class="mdi" viewBox="0 0 44 12"><path d="M2 9.500h7" stroke="#777" stroke-width="2"/><path d="M19 2.500h8v5M18 4h7v5h-7z" fill="none" stroke="#777" stroke-width="1.300"/><path d="M34 2l8 8M42 2l-8 8" stroke="#777" stroke-width="2"/></svg>
</nav>
<div class="toolbar">
<i class="grip"></i>
<button class="tb" aria-label="New"><svg><use href="#i-new"/></svg></button><button class="tb" aria-label="Open"><svg><use href="#i-open"/></svg></button><button class="tb" aria-label="Project"><svg><use href="#i-cab"/></svg></button><button class="tb" aria-label="Blocks"><svg><use href="#i-cabb"/></svg></button><button class="tb" aria-label="Save"><svg><use href="#i-save"/></svg></button><button class="tb" aria-label="Notes"><svg><use href="#i-note"/></svg></button><button class="tb" aria-label="Print"><svg><use href="#i-print"/></svg></button><button class="tb" aria-label="Preview"><svg><use href="#i-prev"/></svg></button>
<i class="sep"></i>
<button class="tb" aria-label="Undo"><svg><use href="#i-undo"/></svg></button><button class="tb" aria-label="Redo"><svg><use href="#i-redo"/></svg></button>
<i class="sep"></i>
<button class="tb" aria-label="Select polygon"><svg><use href="#i-selp"/></svg></button><button class="tb" aria-label="Select ellipse"><svg><use href="#i-sele"/></svg></button><button class="tb" aria-label="Select circle"><svg><use href="#i-selc"/></svg></button><button class="tb" aria-label="Add to selection"><svg><use href="#i-seln"/></svg></button><button class="tb" aria-label="Select special"><svg><use href="#i-selw"/></svg></button>
<i class="sep"></i>
<button class="tb on" aria-label="Navigator"><svg><use href="#i-list"/></svg></button><button class="tb" aria-label="Tables"><svg><use href="#i-table"/></svg></button>
<i class="sep"></i>
<button class="tb" aria-label="New load case"><svg><use href="#i-nload"/></svg></button>
<select class="combo main" aria-label="Load case"><option>LC3</option></select>
<button class="tb" aria-label="Previous"><svg><use href="#i-l"/></svg></button><button class="tb" aria-label="Next"><svg><use href="#i-r"/></svg></button><button class="tb" aria-label="Show loads"><svg><use href="#i-eyeld"/></svg></button><button class="tb" aria-label="Load values"><svg viewBox="0 0 18 16"><text x="2" y="6" class="ict">x.xx</text><use href="#arw" x="2" y="6" transform="scale(.9)"/><path d="M1 15.200h15" stroke="#222" stroke-width="1.500"/></svg></button><button class="tb" aria-label="Show results"><svg><use href="#i-eyeres"/></svg></button><button class="tb" aria-label="Result values"><svg viewBox="0 0 18 16"><text x="2" y="6" class="ict">x.xx</text><path d="M1 15V12l7-2z" fill="#2449b5"/><path d="M17 8v4l-9 1z" fill="#d22"/><path d="M1 14l16-4" stroke="#222"/></svg></button>
<i class="sep"></i>
<button class="tb" aria-label="View"><svg><use href="#i-glass"/></svg></button><button class="tb" aria-label="Calculation settings"><svg><use href="#i-abaw"/></svg></button><button class="tb" aria-label="Calculate"><svg><use href="#i-aba"/></svg></button>
<i class="grip brk"></i>
<button class="tb" aria-label="Snap"><svg><use href="#i-hand"/></svg></button><button class="tb" aria-label="Grid"><svg><use href="#i-grid"/></svg></button><button class="tb" aria-label="Plane XY"><svg><use href="#i-pl1"/></svg></button><button class="tb on" aria-label="Plane YZ"><svg><use href="#i-pl2"/></svg></button><button class="tb" aria-label="Plane XZ"><svg><use href="#i-pl3"/></svg></button><button class="tb" aria-label="Work plane"><svg><use href="#i-gpl"/></svg></button><button class="tb" aria-label="Coordinate system"><svg><use href="#i-axw"/></svg></button>
<i class="sep"></i>
<button class="tb" aria-label="Move"><svg><use href="#i-move"/></svg></button><button class="tb" aria-label="Rotate"><svg><use href="#i-rot"/></svg></button><button class="tb" aria-label="Mirror"><svg><use href="#i-mir"/></svg></button><button class="tb" aria-label="Connect"><svg><use href="#i-cross"/></svg></button><button class="tb" aria-label="Info"><svg><use href="#i-info"/></svg></button><button class="tb half" aria-label="More"><svg><use href="#i-bat"/></svg></button>
<i class="grip brk"></i>
<button class="tb" aria-label="Screen"><svg><use href="#i-scr"/></svg></button>
</div>
<div class="toolbar">
<i class="grip"></i>
<button class="tb" aria-label="New node"><svg><use href="#i-node"/></svg></button><i class="dd"></i><button class="tb" aria-label="New line"><svg><use href="#i-line"/></svg></button><button class="tb" aria-label="New member"><svg><use href="#i-mem"/></svg></button><i class="dd"></i><button class="tb" aria-label="New arc"><svg><use href="#i-arc"/></svg></button><i class="dd"></i>
<i class="sep"></i>
<button class="tb" aria-label="Nodal support"><svg><use href="#i-nsup"/></svg></button><button class="tb" aria-label="Line support"><svg><use href="#i-lsup"/></svg></button><button class="tb" aria-label="Surface support"><svg><use href="#i-ssup"/></svg></button>
<i class="sep"></i>
<button class="tb" aria-label="Dimension"><svg><use href="#i-dimx"/></svg></button><i class="dd"></i><button class="tb" aria-label="Comment"><svg viewBox="0 0 18 16"><path d="M2 15l4-5h11M2 15v-4M2 15h4" fill="none" stroke="#555" stroke-width="1.300"/><text x="8" y="6" class="ict">xx</text><use href="#star"/></svg></button><button class="tb" aria-label="Guidelines"><svg><use href="#i-frame"/></svg></button>
<i class="sep"></i>
<button class="tb" aria-label="Surface"><svg><use href="#i-surf"/></svg></button><i class="dd"></i><button class="tb" aria-label="Opening"><svg><use href="#i-opng"/></svg></button><i class="dd"></i><button class="tb" aria-label="Shell"><svg><use href="#i-shell"/></svg></button><i class="dd"></i><button class="tb" aria-label="Solid"><svg><use href="#i-solid"/></svg></button><button class="tb" aria-label="Solids"><svg><use href="#i-cubes"/></svg></button><i class="dd"></i>
<i class="sep"></i>
<button class="tb" aria-label="Section"><svg><use href="#i-sect"/></svg></button><i class="dd"></i><button class="tb" aria-label="Nodal load"><svg><use href="#i-pl"/></svg></button><button class="tb" aria-label="Member load"><svg><use href="#i-ll"/></svg></button><button class="tb" aria-label="Line load"><svg><use href="#i-ll"/></svg></button><button class="tb" aria-label="Surface load"><svg><use href="#i-sl"/></svg></button><button class="tb" aria-label="Free load"><svg><use href="#i-fl"/></svg></button><i class="dd"></i>
<i class="grip brk"></i>
<button class="tb" aria-label="Pan"><svg><use href="#i-pan"/></svg></button><button class="tb" aria-label="Zoom window"><svg><use href="#i-zw"/></svg></button><button class="tb" aria-label="Zoom all"><svg><use href="#i-zx"/></svg></button><button class="tb" aria-label="Isometric"><svg><use href="#i-box"/></svg></button><button class="tb" aria-label="Views"><svg><use href="#i-steps"/></svg></button>
<i class="sep"></i>
<button class="tb" aria-label="View X"><svg viewBox="0 0 16 16"><path d="M2 3v12M0 12l2 3 2-3" stroke="#2a52be" stroke-width="1.600" fill="none"/><path d="M2 3h12M11 0l4 3-4 3" fill="none" stroke="#159c2c" stroke-width="2"/><text x="7" y="14" class="icl">X</text></svg></button><button class="tb" aria-label="View Y"><svg viewBox="0 0 16 16"><path d="M14 3v12M12 12l2 3 2-3" stroke="#2a52be" stroke-width="1.600" fill="none"/><path d="M14 3H2M5 0L1 3l4 3" fill="none" stroke="#da1c2c" stroke-width="2"/><text x="3" y="14" class="icl">Y</text></svg></button><button class="tb" aria-label="View Z"><svg viewBox="0 0 16 16"><path d="M2 3v12M0 12l2 3 2-3" stroke="#159c2c" stroke-width="1.600" fill="none"/><path d="M2 3h12M11 0l4 3-4 3" fill="none" stroke="#da1c2c" stroke-width="2"/><text x="7" y="14" class="icl">Z</text></svg></button><button class="tb" aria-label="View -Y"><svg viewBox="0 0 16 16"><path d="M2 3v12M0 12l2 3 2-3" stroke="#2a52be" stroke-width="1.600" fill="none"/><path d="M3 3h11M11 0l4 3-4 3" fill="none" stroke="#da1c2c" stroke-width="2"/><circle cx="3" cy="3" r="3" fill="#188a2c"/><text x="5" y="14" class="icl">-Y</text></svg></button><i class="dd"></i><button class="tb" aria-label="Visibility"><svg><use href="#i-micro"/></svg></button><i class="dd"></i>
<i class="sep"></i>
<button class="tb" aria-label="Render"><svg><use href="#i-render"/></svg></button><i class="dd"></i>
<i class="grip brk"></i>
<button class="tb" aria-label="Deformation"><svg><use href="#i-defo"/></svg></button><button class="tb" aria-label="Animate"><svg><use href="#i-cyl"/></svg></button>
<i class="sep"></i>
<button class="tb" aria-label="Members"><svg><use href="#i-ires"/></svg></button><button class="tb" aria-label="Isobands"><svg><use href="#i-iso"/></svg></button><button class="tb" aria-label="Solids results"><svg><use href="#i-ball"/></svg></button><button class="tb" aria-label="Reactions"><svg><use href="#i-reac"/></svg></button><button class="tb" aria-label="Sections"><svg><use href="#i-spoon"/></svg></button><button class="tb" aria-label="Windows"><svg><use href="#i-four"/></svg></button><i class="dd"></i><button class="tb" aria-label="Diagrams"><svg><use href="#i-icurve"/></svg></button><button class="tb" aria-label="Result tables"><svg><use href="#i-tabs"/></svg></button>
</div>

<div class="work">
<aside class="dock">
  <div class="dockhead"><h2>Project Navigator - Display</h2><svg class="ic"><use href="#i-pin"/></svg><svg class="ic"><use href="#i-x"/></svg></div>
  <div class="dockbody">
    <ul class="tree root">
      <li><div class="row"><b class="tg">−</b><i class="dots"></i><input type="checkbox" id="t0" checked><svg class="ic"><use href="#i-disp"/></svg><label class="strong" for="t0">Model</label></div>
      <ul>
        <li class="row"><b class="tg">+</b><i class="dots"></i><input type="checkbox" id="t1" checked><svg class="ic"><use href="#i-disp"/></svg><label for="t1">Nodes</label></li>
        <li><div class="row"><b class="tg">−</b><i class="dots"></i><input type="checkbox" id="t2" checked><svg class="ic"><use href="#i-disp"/></svg><label for="t2">Lines</label></div>
        <ul class="last">
          <li class="row"><b class="tg">+</b><i class="dots"></i><input type="checkbox" id="t3"><svg class="ic"><use href="#i-disp"/></svg><label for="t3">Line Axis System</label></li>
          <li class="row"><i class="dots long"></i><input type="checkbox" id="t4" checked><svg class="ic"><use href="#i-disp"/></svg><label for="t4">Line Hinges</label></li>
          <li class="row"><i class="dots long"></i><input type="checkbox" id="t5"><svg class="ic"><use href="#i-disp"/></svg><label for="t5">Line Orientations</label></li>
          <li class="row"><i class="dots long"></i><input type="checkbox" id="t6" checked><svg class="ic"><use href="#i-disp"/></svg><label for="t6">Control Lines</label></li>
          <li class="row"><i class="dots long"></i><input type="checkbox" id="t7"><svg class="ic"><use href="#i-disp"/></svg><label for="t7">Center Points</label></li>
          <li class="row"><i class="dots long"></i><input type="checkbox" id="t8"><svg class="ic"><use href="#i-disp"/></svg><label for="t8">On Members</label></li>
        </ul></li>
        <li class="row"><b class="tg">+</b><i class="dots"></i><input type="checkbox" id="t9" checked><svg class="ic"><use href="#i-disp"/></svg><label for="t9">Surfaces</label></li>
        <li class="row"><b class="tg">+</b><i class="dots"></i><input type="checkbox" id="t10" checked><svg class="ic"><use href="#i-disp"/></svg><label for="t10">Solids</label></li>
        <li class="row"><i class="dots long"></i><input type="checkbox" id="t11" checked><svg class="ic"><use href="#i-disp"/></svg><label for="t11">Solid Orthotropies</label></li>
        <li class="row"><i class="dots long"></i><input type="checkbox" id="t12"><svg class="ic"><use href="#i-disp"/></svg><label for="t12">Openings</label></li>
        <li class="row"><b class="tg">+</b><i class="dots"></i><input type="checkbox" id="t13" checked><svg class="ic"><use href="#i-disp"/></svg><label for="t13">Nodal Supports</label></li>
        <li class="row"><b class="tg">+</b><i class="dots"></i><input type="checkbox" id="t14" checked><svg class="ic"><use href="#i-disp"/></svg><label for="t14">Line Supports</label></li>
        <li class="row"><i class="dots long"></i><input type="checkbox" id="t15" checked><svg class="ic"><use href="#i-disp"/></svg><label for="t15">Surface Supports</label></li>
      </ul></li>
    </ul>
    <div class="vbar"><svg class="ic"><use href="#i-up"/></svg><i class="thumb t200"></i></div>
  </div>
</aside>
<main class="view">
<svg class="scene" viewBox="215 109 985 308" role="img" aria-label="Building model">
  <path d="M380 406h120v11H380z" fill="#0be890"/>
  <path d="M283 388h12v29h-12z" fill="#f3961c"/><path d="M289 388h6v29h-6z" fill="#dc8612"/>
  <path d="M286 219l550 83 157-70h4v185H497l-211-28z" fill="#00ffa0"/>
  <path d="M836 302l94-42v157h-94z" fill="#00fb98"/>
  <path d="M307 387l52-26 29-16 59-33 56 8v97h-6z" fill="#14e392"/>
  <path d="M575 339l97 14v64H575z" fill="#10e695"/><path d="M508 417l67-29 97-30v59z" fill="#0cf09a"/><path d="M585 409l20-12 28 4-18 16h-30z" fill="#00ffa8"/>
  <path d="M383 265l64 10v43l-60 24v-18h-4z" fill="#24ffa9"/><path d="M345 233l20-14v60l-20 9z" fill="#1affa5"/><path d="M336 292l29-14v-60" fill="none" stroke="#10d88e"/>
  <path d="M371 324v-61M371 263l82 12M371 324l82 12" stroke="#07351f" stroke-width="1.400" fill="none"/>
  <path d="M410 329l37-17h4v23z" fill="#b21a12"/><path d="M426 329l25-9v15z" fill="#7c1e14"/>
  <path d="M546 289l71 11v61l-71-11z" fill="#08fa9b" stroke="#0a5a37"/><path d="M588 298l27 4v33l-27-4z" fill="#26ffae"/><path d="M575 331l40 6v23l-40-6z" fill="#a92018"/><path d="M575 344l40 5v11l-40-6z" fill="#791d14"/>
  <path d="M674 309l156 24v37l-156-24z" fill="#22ffb0"/><path d="M674 346l156 23v48H674z" fill="#a92018"/><path d="M674 356l140 21-70 40h-70z" fill="#781e14"/><path d="M830 377v40h-88z" fill="#781e14"/>
  <path d="M830 369v7l-86 41h-14z" fill="#b00000"/><path d="M830 373l-92 44" stroke="#230" stroke-width="1.200"/><path d="M826 380l-72 35" stroke="#90120d" stroke-width="4" stroke-dasharray="9 6"/>
  <path d="M674 352l156 23" stroke="#3e5142" fill="none"/><path d="M690 351l140 20" stroke="#3d7961" stroke-width="9" stroke-dasharray="1.500 20"/>
  <path d="M851 325l66-29v88l-66 30z" fill="#22ffb0" stroke="#13643f"/><path d="M856 373l61 10v1l-61 28z" fill="#8c1f16"/><path d="M856 373l54 9v5l-54-7z" fill="#ae2018"/><path d="M856 412l61-28v-88" fill="none" stroke="#0b2a1b" stroke-width="1.500"/>
  <path d="M934 385l59 8v12l-26 12h-33z" fill="#a92018"/><path d="M934 396l36 6-24 15h-12z" fill="#781e14"/><path d="M936 390l57 8M950 417l43-19" stroke="#3e5142"/><path d="M950 413l40-20" stroke="#f00" stroke-width="6" stroke-dasharray="2 11"/>
  <path d="M284 394v23M289 389l164 23v5h-8l-150-22v-2z" fill="#cc1f1f"/><path d="M450 417h47l-47-6z" fill="#10e08e"/><path d="M286 392l-3 2h8l154 23h-65z" fill="none"/>
  <path d="M289 215l158-71 546 82v6l-157 70-547-82z" fill="#b31c1a"/>
  <path d="M289 221l158-71 546 82-157 70z" fill="#a32016"/>
  <path d="M307 220l140-63 524 79-135 61z" fill="#781e14"/>
  <path d="M463 183l88 12v34l-43 20-45-7z" fill="#941e22"/><path d="M463 243v-60l88 12v34" fill="none" stroke="#641013"/>
  <path d="M344 229l21-12v16" fill="none" stroke="#941e22"/>
  <path d="M290 219l157-69 546 81" fill="none" stroke="#160b05" stroke-width="1.200"/>
  <path d="M318 211l129-57 530 79" fill="none" stroke="#424539" stroke-width="2" stroke-dasharray="7 15"/>
  <path d="M289 216l547 82v4l-547-81z" fill="#c81a16"/>
  <g stroke-width="6"><path d="M583 168l-157 71M665 181l-157 69M829 205l-157 70" stroke="#b20000"/></g>
  <g stroke="#a00c09" stroke-width="5" stroke-dasharray="10 5"><path d="M583 174l-135 61M665 187l-120 53M829 212l-137 61"/></g>
  <g stroke="#240502" stroke-width="1.200"><path d="M583 170l-157 71M665 183l-157 69M829 207l-157 70"/></g>
  <g stroke="#48423c" stroke-width="2" stroke-dasharray="7 9"><path d="M577 176l-138 62M659 189l-143 63M823 213l-140 62"/></g>
  <path d="M508 252l63-27h4v37z" fill="#15e88c"/><path d="M512 251l60-26" stroke="#184f31" stroke-dasharray="8 4" stroke-width="2"/>
  <path d="M934 259l59-26v4l-59 27z" fill="#a81c14"/>
  <path d="M290 221l546 81 157-70" fill="none" stroke="#042817" stroke-width="1.500"/>
  <path d="M300 221l536 79 140-62" fill="none" stroke="#486453" stroke-width="2" stroke-dasharray="5 18"/>
  <path d="M289 227l547 81 94-42" fill="none" stroke="#10d586" stroke-width="4" opacity=".7"/>
  <g fill="none" stroke="#0b9a5e"><path d="M344 229v168M383 234v111M571 262v90M719 283v75M856 312v98"/></g>
  <g fill="none" stroke="#07653c"><path d="M290 221v168M454 245v172M508 252v165M930 260v157M993 232v185"/></g>
  <g fill="none" stroke="#06321e" stroke-width="1.400"><path d="M672 277v140M836 302v115M371 263v61M546 289v61M290 389l210 28M672 309l164 24"/></g>
  <g stroke="#0bb88f" stroke-width="15" stroke-dasharray="2 26"><path d="M344 242v158M454 252v160M508 266v148"/></g>
  <g stroke="#0bb88f" stroke-width="8" stroke-dasharray="2 26"><path d="M293 235v150M383 275v50M676 285v30M832 308v30M926 274v140M990 244v160M719 343v10M860 336v40"/></g>
  <path d="M298 386l210 30" stroke="#0a9a6c" stroke-width="7" stroke-dasharray="1.500 18"/>
  <path d="M300 382l147-68" stroke="#0fcf88" stroke-width="7" stroke-dasharray="1 13"/>
  <path d="M508 410l50 7M500 408l-2 9" stroke="#087047" stroke-dasharray="1 1"/>
  <g stroke="#68150f" stroke-width="14" stroke-dasharray="1.500 26"><path d="M382 184v50M719 204v60M856 224v60M583 185v60"/></g>
  <g fill="#70403a"><path d="M370 262h3v3h-3zM370 323h3v3h-3zM452 274h3v3h-3zM452 335h3v3h-3zM544 288h3v3h-3zM616 299h3v3h-3zM544 349h3v3h-3zM616 360h3v3h-3zM850 324h3v3h-3zM916 295h3v3h-3zM916 383h3v3h-3zM850 413h3v3h-3zM835 332h3v3h-3zM835 301h3v3h-3z"/></g>
  <circle cx="289" cy="393" r="2.500" fill="#fff" stroke="#16696b" stroke-width="1.500"/>
</svg>
</main>
</div>

<section class="dialog">
<header class="titlebar dlg"><svg class="ic"><use href="#i-dome"/></svg><h1>Result Diagram in Section</h1>
<button class="wb" aria-label="Minimize"><svg><use href="#i-min"/></svg></button><button class="wb" aria-label="Maximize"><svg><use href="#i-max"/></svg></button><button class="wb" aria-label="Close"><svg><use href="#i-close"/></svg></button></header>
<div class="toolbar dtb">
<i class="grip"></i><select class="combo c90 white" aria-label="Section"><option></option></select>
<button class="tb pale" aria-label="Previous"><svg><use href="#i-l"/></svg></button><button class="tb pale" aria-label="Next"><svg><use href="#i-r"/></svg></button><button class="tb pale" aria-label="Pick"><svg><use href="#i-curx"/></svg></button>
<i class="gap30"></i><i class="grip brk"></i><select class="combo c90" aria-label="Type"><option></option></select><i class="grip brk"></i>
<button class="tb" aria-label="Print"><svg><use href="#i-print"/></svg></button><i class="sep"></i><button class="tb" aria-label="Delete diagrams"><svg><use href="#i-drx"/></svg></button><i class="sep"></i><button class="tb" aria-label="Zoom in"><svg><use href="#i-zp"/></svg></button><button class="tb" aria-label="Zoom out"><svg><use href="#i-zm"/></svg></button><i class="sep"></i><button class="tb" aria-label="Filter"><svg><use href="#i-drf"/></svg></button><button class="tb pale" aria-label="Save"><svg><use href="#i-save"/></svg></button><button class="tb" aria-label="Export to Excel"><svg><use href="#i-xls"/></svg></button>
<select class="combo c156" aria-label="Saved diagrams"><option></option></select>
<button class="tb pale" aria-label="Previous"><svg><use href="#i-l"/></svg></button><button class="tb pale" aria-label="Next"><svg><use href="#i-r"/></svg></button><button class="tb" aria-label="Surfaces"><svg><use href="#i-birds"/></svg></button><button class="tb" aria-label="Support"><svg><use href="#i-supl"/></svg></button><button class="tb" aria-label="Reverse"><svg><use href="#i-swap"/></svg></button><button class="tb" aria-label="Symmetry"><svg><use href="#i-sym"/></svg></button><button class="tb" aria-label="Smooth"><svg><use href="#i-trend"/></svg></button><i class="sep"></i><button class="tb" aria-label="Ribs"><svg><use href="#i-hsup"/></svg></button><button class="tb on" aria-label="Average"><svg><use href="#i-rsup"/></svg></button><i class="sep"></i><i class="grip brk"></i>
<button class="tb on" aria-label="Navigator"><svg><use href="#i-tree"/></svg></button><button class="tb" aria-label="Values"><svg viewBox="0 0 18 16"><path d="M1 1h16v5H1z" fill="#3d9940"/><path d="M3 3v3M6 3v3M9 3v3M12 3v3M15 3v3" stroke="#c8edc5"/><text x="2" y="14" class="icr">0.00</text><path d="M6 15.500h10" stroke="#24c"/></svg></button><i class="sep"></i>
<select class="combo c146 white" aria-label="Load case"><option>LC3</option></select><button class="tb pale" aria-label="Previous"><svg><use href="#i-l"/></svg></button><button class="tb pale" aria-label="Next"><svg><use href="#i-r"/></svg></button><i class="rest"></i>
</div>
<div class="dmain">
<aside class="nav">
  <div class="dockhead"><h2>Navigator</h2><svg class="ic"><use href="#i-pin"/></svg><svg class="ic"><use href="#i-x"/></svg></div>
  <div class="navbody">
    <ul class="tree results">
      <li><div class="row"><b class="tg">−</b><i class="dots"></i><input type="checkbox" class="mixed" id="d0"><label class="focus" for="d0">Local Deformations</label></div>
      <ul class="last"><li class="row"><i class="dots long"></i><input type="checkbox" id="d1"><label for="d1">u<sub>x</sub></label></li><li class="row"><i class="dots long"></i><input type="checkbox" id="d2"><label for="d2">u<sub>y</sub></label></li><li class="row"><i class="dots long"></i><input type="checkbox" id="d3"><label for="d3">u<sub>z</sub></label></li><li class="row"><i class="dots long"></i><input type="checkbox" id="d4"><label for="d4">φ<sub>x</sub></label></li></ul></li>
      <li><div class="row"><b class="tg">−</b><i class="dots"></i><input type="checkbox" class="mixed" id="d5"><label for="d5">Forces</label></div>
      <ul class="last"><li class="row"><i class="dots long"></i><input type="checkbox" id="d6" checked><label for="d6">n</label></li><li class="row"><i class="dots long"></i><input type="checkbox" id="d7"><label for="d7">v<sub>y</sub></label></li><li class="row"><i class="dots long"></i><input type="checkbox" id="d8" checked><label for="d8">v<sub>z</sub></label></li><li class="row"><i class="dots long"></i><input type="checkbox" id="d9"><label for="d9">m<sub>x</sub></label></li></ul></li>
    </ul>
    <div class="hbar"><svg class="ic"><use href="#i-left"/></svg><i></i><svg class="ic"><use href="#i-right"/></svg></div>
  </div>
  <div class="tabs"><button class="tab">Results</button><svg viewBox="0 0 30 12"><path d="M7 2v8L3 6zM20 2v8l4-4z" fill="none" stroke="#777"/></svg></div>
</aside>
<div class="content">
  <div class="ruler">
    <svg class="scale" viewBox="170 476 811 34">
      <path d="M213 496h760" stroke="#000"/><path d="M213.500 494.500h760" stroke="#000" stroke-width="3" stroke-dasharray="1 18"/><path d="M213.500 492h761" stroke="#000" stroke-width="7" stroke-dasharray="1 94"/>
      <path d="M213.500 489v13M973.500 489v13" stroke="#000"/>
      <g fill="#fff" stroke="#d00"><circle cx="213.500" cy="496" r="2"/><circle cx="973.500" cy="496" r="2"/></g>
      <g class="rt"><text x="213" y="485">0.000</text><text x="403" y="485">0.500</text><text x="593" y="485">1.000</text><text x="783" y="485">1.500</text><text x="982" y="485">2.000 m</text><text x="593" y="507">»H28»</text></g>
    </svg>
    <div class="pos"><label for="px">x:</label><span class="spin"><input id="px" type="text" value="0.000"><svg viewBox="0 0 8 16"><path d="M0 0h8v16H0z" fill="#e4e4e4" stroke="#999"/><path d="M4 2l3 4H1zM4 14l3-4H1z"/><path d="M0 8h8" stroke="#999"/></svg></span><span>[m]</span><input class="box" type="checkbox" id="fx"><label for="fx">Fixed</label></div>
  </div>
  <div class="plots">
    <div class="charts">
      <h3>Forces - v<sub>z</sub> [kN/m]</h3>
      <svg class="chart" viewBox="170 531 811 209">
        <path d="M213.500 625v-36.500L289 611l76 9.500 35 4.500z" fill="#ff8080"/>
        <path d="M400 625l41 3.500 76 7 76 6 76 5 76 4 76 3 76-5 76 18.500V625z" fill="#a6caf0"/>
        <path d="M213.500 588.500L289 611l76 9.500 76 8 76 7 76 6 76 5 76 4 76 3 76-5 76 18.500V625" fill="none" stroke="#000"/>
        <path d="M289.500 611v14M365.500 620v5M441.500 625v3M517.500 625v10M593.500 625v16M669.500 625v21M745.500 625v25M821.500 625v28M897.500 625v23" class="wl"/><path d="M289.500 611v14M365.500 620v5M441.500 625v3M517.500 625v10M593.500 625v16M669.500 625v21M745.500 625v25M821.500 625v28M897.500 625v23" class="dl"/>
        <path d="M213 625h761" stroke="#000080" stroke-width="2"/>
        <path d="M211 622h5v5h-5zM971 622h5v5h-5z"/><path d="M212 587h3v3h-3z" fill="red"/><path d="M972 666h3v3h-3z" fill="#00f"/>
        <path d="M288 610h3v3h-3zM364 619h3v3h-3zM440 627h3v3h-3zM516 634h3v3h-3zM592 640h3v3h-3zM668 645h3v3h-3zM744 649h3v3h-3zM820 652h3v3h-3zM896 647h3v3h-3z" fill="#808080"/>
        <g class="vt"><text class="neg" transform="translate(217 582) rotate(-90)">-1.29</text><text transform="translate(293 606) rotate(-90)">-0.49</text><text transform="translate(369 615) rotate(-90)">-0.17</text>
        <g text-anchor="end"><text transform="translate(446 634) rotate(-90)">0.15</text><text transform="translate(522 641) rotate(-90)">0.40</text><text transform="translate(598 648) rotate(-90)">0.61</text><text transform="translate(674 652) rotate(-90)">0.79</text><text transform="translate(750 656) rotate(-90)">0.93</text><text transform="translate(826 659) rotate(-90)">1.05</text><text transform="translate(902 654) rotate(-90)">0.86</text><text class="pos-v" transform="translate(978 672) rotate(-90)">1.53</text></g></g>
        <path d="M215 566h64v18h-60l-4 4z" fill="#f0f0f0"/><text class="tip" x="219" y="579">-1.29 kN/m</text>
      </svg>
      <h3 class="second">Forces - n [kN/m]</h3>
      <svg class="chart" viewBox="170 761 811 117">
        <path d="M213.500 825l76 72 76-9 76-15.500 76-11.500 76-8.500 76-5.500h76l76 5.500 76 7 65-34.500z" fill="#a6caf0"/><path d="M962 825l11-7v7z" fill="#ff8080"/>
        <path d="M213.500 825l76 72 76-9 76-15.500 76-11.500 76-8.500 76-5.500h76l76 5.500 76 7 65-34.500 11-6v6" fill="none" stroke="#000"/>
        <path d="M289.500 825v53M365.500 825v53M441.500 825v47M517.500 825v36M593.500 825v27M669.500 825v22M745.500 825v22M821.500 825v27M897.500 825v34" class="wl"/><path d="M289.500 825v53M365.500 825v53M441.500 825v47M517.500 825v36M593.500 825v27M669.500 825v22M745.500 825v22M821.500 825v27M897.500 825v34" class="dl"/>
        <path d="M213 825h761" stroke="#000080" stroke-width="2"/><path d="M211 823h5v5h-5zM971 823h5v5h-5z"/><path d="M972 817h3v3h-3z" fill="red"/>
        <path d="M440 871h3v3h-3zM516 860h3v3h-3zM592 851h3v3h-3zM668 846h3v3h-3zM744 846h3v3h-3zM820 851h3v3h-3zM896 858h3v3h-3z" fill="#808080"/>
        <g class="vt"><g text-anchor="end"><text transform="translate(522 867) rotate(-90)">0.04</text><text transform="translate(598 858) rotate(-90)">0.03</text><text transform="translate(674 853) rotate(-90)">0.03</text><text transform="translate(750 853) rotate(-90)">0.03</text><text transform="translate(826 858) rotate(-90)">0.03</text><text transform="translate(902 865) rotate(-90)">0.04</text></g><text class="neg" transform="translate(977 813) rotate(-90)">-0.01</text></g>
        <path d="M215 803h46v18h-42l-4 4z" fill="#f0f0f0"/><text class="tip" x="219" y="816">0 kN/m</text>
      </svg>
    </div>
    <div class="tables">
      <section class="cell"><div class="card"><h4>Forces v-z</h4>
        <div class="tw"><table><thead><tr><th colspan="2">x<br>[m]</th><th>v<sub>z</sub><br>[kN/m]</th></tr></thead><tbody>
        <tr><td><span class="mk min">MIN</span><svg class="pt" viewBox="0 0 11 4"><path d="M2 2h9" stroke="#000" stroke-width="1.500"/><circle cx="2" cy="2" r="2" fill="#0000c0"/></svg></td><td>0.000</td><td>-1.29</td></tr><tr><td></td><td>0.200</td><td>-0.49</td></tr><tr><td></td><td>0.400</td><td>-0.17</td></tr><tr><td></td><td>0.600</td><td>0.15</td></tr><tr><td></td><td>0.800</td><td>0.40</td></tr><tr><td></td><td>1.000</td><td>0.61</td></tr><tr><td></td><td>1.200</td><td>0.79</td></tr></tbody></table>
        <div class="vbar inner"><svg class="ic"><use href="#i-up"/></svg><i class="thumb t63"></i><i class="fill"></i><svg class="ic"><use href="#i-down"/></svg></div></div>
        <div class="opts"><input class="box" type="checkbox" id="mm"><label for="mm">Max/min only</label><input class="box" type="checkbox" id="eo"><label for="eo">Ends only</label></div></div></section>
      <section class="cell"><div class="card"><h4>Forces n</h4>
        <div class="tw"><table><thead><tr><th colspan="2">x<br>[m]</th><th>n<br>[kN/m]</th></tr></thead><tbody>
        <tr><td><span class="mk"></span><svg class="pt" viewBox="0 0 11 4"><path d="M2 2h9" stroke="#000" stroke-width="1.500"/><circle cx="2" cy="2" r="2" fill="#0000c0"/></svg></td><td>0.000</td><td>0.00</td></tr><tr><td><span class="mk max">MAX</span></td><td>0.200</td><td>0.08</td></tr><tr><td></td><td>0.400</td><td>0.07</td></tr><tr><td></td><td>0.600</td><td>0.05</td></tr><tr><td></td><td></td><td></td></tr></tbody></table>
        <div class="vbar inner"><svg class="ic"><use href="#i-up"/></svg><i class="thumb fill"></i></div></div></div></section>
    </div>
    <div class="vbar outer"><svg class="ic"><use href="#i-up"/></svg><i class="thumb t243"></i><i class="fill"></i><svg class="ic"><use href="#i-down"/></svg></div>
  </div>
  <i class="cursor"></i>
</div>
</div>
<footer class="status"><span class="pane"><b>Start X,Y,Z:</b> 0.000, 0.000, 0.000 m</span><span class="pane"><b>End X,Y,Z:</b> 0.000, 0.000, 0.000 m</span><span class="pane">Vector X,Y,Z: <b></b>0.000, 0.000, 0.000 m</span><span class="size"><svg viewBox="0 0 12 12"><path d="M9 1h2v2H9zM9 5h2v2H9zM5 5h2v2H5zM9 9h2v2H9zM5 9h2v2H5zM1 9h2v2H1z" fill="#777"/></svg></span></footer>
</section>
</div>
</body>
</html>
```
FILE: styles.css
```css
* { box-sizing: border-box; }
body { margin: 0; font: 11px/16px "Open Sans", "Noto Sans", sans-serif; color: #000; background: #d0d4dd; }
h1, h2, h3, h4, ul { margin: 0; padding: 0; font-weight: 400; list-style: none; }
button, input, select { font: inherit; margin: 0; padding: 0; border: 0; background: none; color: inherit; }
svg { display: block; flex: none; }
.defs { position: absolute; width: 0; height: 0; }
.ict { font: 8px "Liberation Serif", serif; }
.icl { font: 10px "Liberation Serif", serif; }
.icr { font: bold 7px "Liberation Sans", sans-serif; fill: #124; }
.ic { width: 16px; height: 16px; }
.app { position: relative; height: 100vh; display: flex; flex-direction: column; overflow: hidden; border-top: 1px solid #817b7c; }

/* Window frame */
.titlebar { display: flex; align-items: center; height: 30px; flex: none; padding-left: 8px; background: #fff; color: #929292; }
.titlebar h1 { flex: 1; font-size: 11px; margin-left: 5px; }
.wb { width: 46px; height: 28px; display: grid; place-items: center; }
.wb svg { width: 12px; height: 12px; }
.titlebar.dlg { color: #000; }

.menubar { display: flex; align-items: center; height: 24px; flex: none; color: #3e4657; }
.bridge { width: 16px; height: 13px; }
.menus { display: flex; flex: 1; gap: 16px; margin-left: 9px; }
.menus a { color: inherit; text-decoration: none; }
.mdi { width: 44px; height: 12px; margin: 6px 4px 0 0; }

/* Toolbars */
.toolbar { display: flex; align-items: center; height: 26px; flex: none; background: linear-gradient(#eaeef6, #dde1ea 50%, #c9ced9); border-bottom: 1px solid #b2b9c8; overflow: hidden; }
.grip { flex: none; width: 10px; height: 16px; background: radial-gradient(circle at 5px 2px, #a2a8b6 1px, transparent 2px) 0 0 / 10px 4px; }
.grip.brk { width: 12px; border-left: 1px solid #f2f4f8; }
.sep { flex: none; width: 8px; height: 14px; background: linear-gradient(90deg, transparent 3px, #abb2c0 3px 4px, #fff 4px 5px, transparent 5px); }
.tb { flex: none; width: 22px; height: 22px; display: grid; place-items: center; overflow: hidden; }
.tb svg { width: 16px; height: 16px; }
.tb svg[viewBox="0 0 18 16"] { width: 18px; }
.tb.half { width: 10px; }
.tb.half svg { width: 8px; }
.tb.on { background: linear-gradient(#fbe3b8, #fdb95c 55%, #ffe09a); border: 1px solid #c2a26c; }
.tb.pale svg { opacity: .45; }
.dd { flex: none; width: 13px; height: 4px; background: #77777c; clip-path: polygon(3px 0, 10px 0, 6px 4px); }
.combo { flex: none; height: 19px; appearance: none; border: 1px solid #9a9a9a; border-radius: 0; padding-left: 2px; background-color: #efefef; background-image: linear-gradient(45deg, transparent 50%, #777 50%), linear-gradient(-45deg, transparent 50%, #777 50%); background-size: 4px 4px; background-position: right 7px top 7px, right 3px top 7px; background-repeat: no-repeat; }
.combo.main { width: 216px; margin: 0 2px; }
.c90 { width: 91px; }
.c156 { width: 156px; margin: 0 2px 0 3px; }
.c146 { width: 146px; margin: 0 2px 0 3px; }
.combo.white { background-color: #fff; }
.combo.c146 { border-color: #fff; }
.dtb .c90 + .tb { margin-left: 2px; }
.gap30 { width: 31px; flex: none; }
.rest { flex: 1; align-self: stretch; margin-left: 3px; background: #d0d4dd; }

/* Docked navigator */
.work { flex: 1; display: flex; min-height: 0; }
.dock { width: 208px; flex: none; display: flex; flex-direction: column; margin-right: 6px; }
.dockhead { display: flex; align-items: center; height: 20px; flex: none; padding: 0 1px 0 4px; background: #bac1cd; color: #3a4354; border-bottom: 1px solid #cdd3de; }
.dockhead h2 { flex: 1; font-size: 11px; white-space: nowrap; }
.dockbody { flex: 1; display: flex; margin: 3px 3px 0; background: #fcfbf3; min-height: 0; }
.tree { flex: 1; min-width: 0; overflow: hidden; }
.tree ul { padding-left: 19px; background: repeating-linear-gradient(transparent 0 1px, #999 1px 2px) 23px 0 / 1px 100% no-repeat; }
.root > li { background: repeating-linear-gradient(transparent 0 1px, #999 1px 2px) 11px 9px / 1px 100% no-repeat; padding-left: 7px; }
.tree ul.last { background-size: 1px calc(100% - 9px); }
.row { display: flex; align-items: center; height: 18px; white-space: nowrap; }
.tg { width: 9px; height: 9px; flex: none; border: 1px solid #8b8f98; background: #fff; font: 9px/6px "Liberation Sans", sans-serif; color: #1d3a86; text-align: center; overflow: hidden; }
.dots { flex: none; width: 6px; height: 1px; margin: 0 1px; background: repeating-linear-gradient(90deg, #999 0 1px, transparent 1px 2px); }
.dots.long { width: 12px; margin-left: 4px; }
.row input, .box { appearance: none; width: 13px; height: 13px; flex: none; border: 1px solid #4e5157; background: linear-gradient(135deg, #fff, #cdd3de); display: grid; place-items: center; }
.row input:checked::after { content: ""; width: 4px; height: 8px; margin-top: -3px; border: solid #000; border-width: 0 2px 2px 0; transform: rotate(42deg); }
.row input.mixed::after { content: ""; width: 7px; height: 7px; background: #979797; }
.row .ic { margin-left: 2px; }
.row label { margin-left: 5px; }
.row input + label { margin-left: 3px; padding: 0 1px; }
.strong { font-weight: 700; }
.row label.focus { background: #e8e8e8; outline: 1px dotted #000; }
sub { font-size: 10px; line-height: 0; vertical-align: -2px; }

.vbar { width: 15px; flex: none; display: flex; flex-direction: column; background: #f0f0f0; }
.thumb { display: block; background: #cdcdcd; }
.t200 { height: 201px; }
.t63 { height: 63px; }
.t243 { height: 243px; }
.fill { flex: 1; }
.view { flex: 1; min-width: 0; background: #fff; border: solid #6f6f75; border-width: 2px 0 0 1px; }
.scene { width: 100%; }

/* Result diagram window */
.dialog { position: absolute; left: 3px; right: 3px; top: 416px; bottom: 0; display: flex; flex-direction: column; border: 1px solid #3f8de0; background: #d0d4dd; box-shadow: 0 0 10px rgba(0, 0, 0, .45); }
.toolbar.dtb { border-bottom: 1px solid #a0a5b2; padding-left: 2px; }
.dmain { flex: 1; display: flex; min-height: 0; }
.nav { width: 159px; flex: none; display: flex; flex-direction: column; margin-right: 6px; }
.navbody { flex: 1; display: flex; flex-direction: column; margin: 3px 2px 0 3px; background: #fff; min-height: 0; border-bottom: 1px solid #8b8f99; }
.results > li { padding-left: 7px; }
.results > li:first-child { background: repeating-linear-gradient(transparent 0 1px, #999 1px 2px) 11px 9px / 1px 100% no-repeat; }
.hbar { display: flex; height: 16px; background: #f0f0f0; justify-content: space-between; }
.hbar i { width: 106px; margin-right: 10px; background: #cdcdcd; }
.tabs { height: 21px; flex: none; display: flex; justify-content: space-between; align-items: flex-start; padding: 0 4px; }
.tabs svg { width: 30px; height: 12px; margin-top: 5px; }
.tab { height: 17px; padding: 0 4px; background: #f2f2f4; border: 1px solid #b8bcc6; border-top: 0; border-radius: 0 0 3px 3px; color: #3e4657; line-height: 17px; }

.content { position: relative; flex: 1; display: flex; flex-direction: column; min-width: 0; margin: 0 2px 1px 0; border: 1px solid #666; border-width: 2px 0 1px 1px; border-bottom-color: #ddd; background: #f0f0f0; }
.ruler { display: flex; align-items: center; height: 36px; flex: none; border-bottom: 1px solid #696969; }
.scale { flex: 1; min-width: 0; overflow: visible; }
.rt { font: 10px "Liberation Sans", sans-serif; text-anchor: middle; fill: #222; }
.pos { width: 213px; flex: none; display: flex; align-items: center; padding-left: 26px; gap: 5px; }
.spin { display: flex; align-items: center; width: 64px; height: 20px; padding-right: 1px; border: 1px solid #7f9db9; background: #fff; }
.spin input { flex: 1; min-width: 0; text-align: right; padding-right: 2px; }
.spin svg { width: 8px; height: 16px; }
.box { background: #fff; border-color: #333; }
.pos .box { margin-left: 13px; }
.pos .box + label { margin-left: -2px; }
.plots { flex: 1; display: flex; min-height: 0; overflow: hidden; }
.charts { flex: 1; min-width: 0; background: #fff; overflow: hidden; }
.charts h3 { height: 19px; padding-left: 9px; background: #dcdcdc; font: bold 11px/19px "Liberation Sans", sans-serif; color: #444; }
.charts h3.second { height: 21px; border-top: 2px solid #f0f0f0; }
.charts sub { font-size: 10px; vertical-align: -1px; }
.chart { width: 100%; }
.wl { stroke: #fff; }
.dl { stroke: #000080; stroke-dasharray: 3 2; }
.vt { font: 11px "Liberation Sans", sans-serif; }
.neg { fill: red; font-weight: 700; }
.pos-v { fill: #00f; font-weight: 700; }
.tip { font: 11px "Open Sans", sans-serif; }
.cursor { position: absolute; left: 43px; top: 28px; bottom: 0; width: 1px; background: #808080; }

/* Value tables */
.tables { width: 196px; flex: none; padding-left: 2px; overflow: hidden; }
.cell { height: 230px; padding: 9px 8px 0 9px; border-bottom: 2px solid #bbb; }
.card { background: #f0f4f9; border: solid #a8a4ea; border-width: 0 1px 1px 0; }
.card h4 { height: 16px; margin-right: -1px; padding-left: 2px; line-height: 16px; background: #dce6f4; color: #1c3a5c; clip-path: polygon(0 0, calc(100% - 10px) 0, 100% 10px, 100% 100%, 0 100%); }
.tw { position: relative; margin: 1px 1px 0 0; border: 1px solid #555; background: #fff; }
table { width: 100%; border-collapse: collapse; table-layout: fixed; }
th { height: 30px; padding: 0; font-weight: 400; line-height: 13px; background: #f0f4f9; border-bottom: 1px solid #555; }
th + th { border-left: 1px solid #555; width: 94px; }
td { height: 19px; padding: 0; line-height: 18px; text-align: right; border-bottom: 1px solid #ececec; }
td:nth-child(1) { text-align: left; padding-left: 5px; border-right: 1px solid #ececec; width: 20px; }
td:nth-child(2) { padding-right: 12px; border-right: 1px solid #ececec; }
td:nth-child(3) { padding-right: 22px; }
.mk { display: block; height: 9px; font: bold 7px/8px "Liberation Sans", sans-serif; }
.min { color: red; }
.max { color: #00f; margin-bottom: 9px; }
.pt { width: 11px; height: 4px; }
.inner { position: absolute; right: 0; top: 30px; bottom: 0; width: 16px; }
.outer { width: 17px; }
.opts { display: flex; align-items: center; height: 21px; padding-left: 2px; gap: 3px; white-space: nowrap; }
.opts label + .box { margin-left: 7px; }

.status { display: flex; justify-content: flex-end; height: 20px; flex: none; border-top: 1px solid #999ea9; background: linear-gradient(#dfe2e8, #a7abb5 45%, #a7abb5 55%, #c6cad3); color: #222; }
.pane { width: 192px; padding-left: 4px; line-height: 20px; border-left: 1px solid #777d89; white-space: nowrap; }
.pane:nth-child(3) { width: 188px; }
.pane b { font-weight: 400; margin-right: 4px; }
.size { width: 18px; padding: 6px 0 0 4px; border-left: 1px solid #777d89; }
.size svg { width: 12px; height: 12px; }
```
